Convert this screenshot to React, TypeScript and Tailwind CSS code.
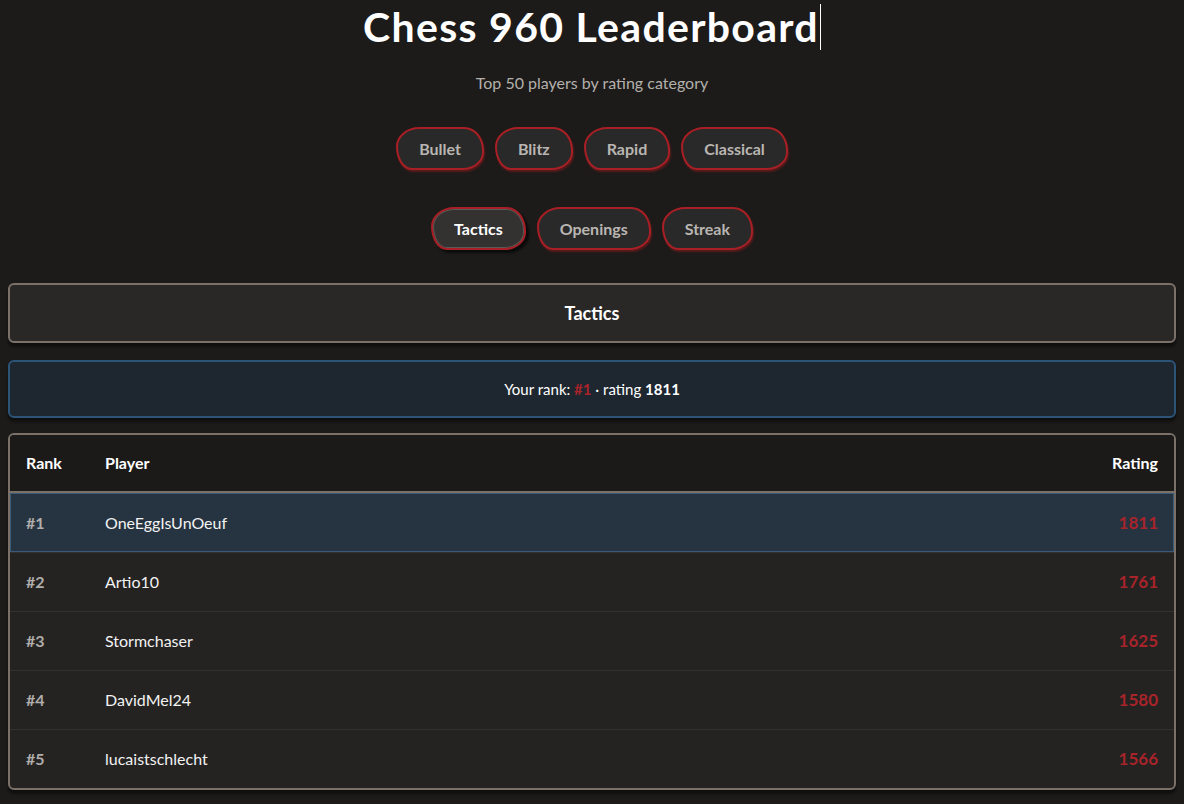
import React, { useState } from "react";

const categories = [
  ["Bullet", "Blitz", "Rapid", "Classical"],
  ["Tactics", "Openings", "Streak"],
];

const players = [
  { rank: 1, name: "OneEggIsUnOeuf", rating: 1811 },
  { rank: 2, name: "Artio10", rating: 1761 },
  { rank: 3, name: "Stormchaser", rating: 1625 },
  { rank: 4, name: "DavidMel24", rating: 1580 },
  { rank: 5, name: "lucaistschlecht", rating: 1566 },
];

// hand-drawn looking corners
const sketchy = "rounded-[24px_20px_22px_16px/20px_24px_18px_24px]";

export default function App() {
  const [active, setActive] = useState("Tactics");

  return (
    <div
      className="min-h-screen bg-[#1c1b1a] text-white px-2 pb-3"
      style={{ fontFamily: "Lato, 'Noto Sans', sans-serif" }}
    >
      <h1 className="flex justify-center pt-[4px] text-[41px] leading-[46px] font-bold tracking-[1.3px]">
        <span className="border-r border-white pr-[1px]">Chess 960 Leaderboard</span>
      </h1>
      <p className="mt-[23px] text-center text-[16px] leading-[20px] text-[#b4b0ab]">
        Top 50 players by rating category
      </p>

      <div className="mt-[34px] flex flex-col items-center gap-[37px]">
        {categories.map((row, i) => (
          <div key={i} className="flex gap-[11px]">
            {row.map((c) => {
              const on = c === active;
              return (
                <button
                  key={c}
                  onClick={() => setActive(c)}
                  className={`${sketchy} h-[43px] px-[21px] border-2 border-[#a81f25] text-[16px] font-bold ${
                    on
                      ? "bg-[#333231] text-white shadow-[inset_0_0_0_1px_#5c5a58,3px_3px_2px_#0c0b0b]"
                      : "bg-[#2a2929] text-[#b9b6b2] shadow-[1px_2px_2px_rgba(140,25,30,0.55)]"
                  }`}
                >
                  {c}
                </button>
              );
            })}
          </div>
        ))}
      </div>

      <div className="mt-[33px] flex h-[60px] items-center justify-center rounded-md border-2 border-[#7b7168] bg-[#292827] shadow-[0_4px_3px_rgba(0,0,0,0.45)]">
        <span className="text-[18px] font-bold">{active}</span>
      </div>

      <div className="mt-[17px] flex h-[58px] items-center justify-center rounded-md border-2 border-[#2b5478] bg-[#1e2630] shadow-[0_4px_3px_rgba(0,0,0,0.45)] text-[15px]">
        <span>
          Your rank: <span className="font-bold text-[#a8242a]">#1</span> · rating{" "}
          <span className="font-bold">1811</span>
        </span>
      </div>

      <div className="mt-[15px] overflow-hidden rounded-md border-2 border-[#7b7168] bg-[#242322] shadow-[0_4px_3px_rgba(0,0,0,0.45)]">
        <div className="flex h-[58px] items-center border-b-2 border-[#7b7168] bg-[#1b1a19] px-4 text-[16px] font-bold">
          <span className="w-[79px]">Rank</span>
          <span className="flex-1">Player</span>
          <span>Rating</span>
        </div>
        {players.map((p) => {
          const me = p.rank === 1;
          return (
            <div
              key={p.rank}
              className={`flex h-[59px] items-center px-4 ${
                me
                  ? "border border-[#3a5a78] bg-[#263340] px-[15px]"
                  : "border-t border-[#333130]"
              }`}
            >
              <span className="w-[79px] text-[16px] font-bold text-[#b0adaa]">#{p.rank}</span>
              <span className="flex-1 text-[16px] text-[#f2f2f2]">{p.name}</span>
              <span className="text-[17px] font-bold text-[#a8242a]">{p.rating}</span>
            </div>
          );
        })}
      </div>
    </div>
  );
}
